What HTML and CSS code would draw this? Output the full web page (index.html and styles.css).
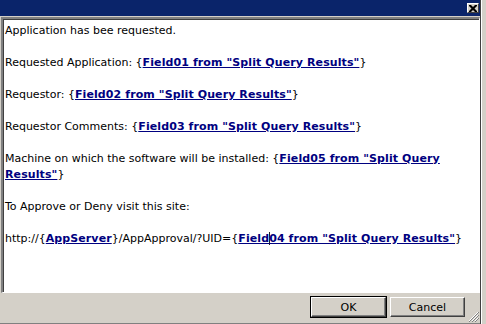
FILE: index.html
```html
<!DOCTYPE html>
<html>
<head>
<meta charset="utf-8">
<link rel="stylesheet" href="styles.css">
</head>
<body>
<div class="desk">
  <div class="dialog">
    <div class="titlebar">
      <span class="close">
        <svg width="8" height="7" viewBox="0 0 8 7"><path d="M0 0h2l2 2 2-2h2v1l-2.5 2.5L8 6v1H6L4 5 2 7H0V6l2.5-2.5L0 1z" fill="#000"/></svg>
      </span>
    </div>
    <div class="content">
      <p>Application has bee requested.</p>
      <p>Requested Application: {<a href="#">Field01 from "Split Query Results"</a>}</p>
      <p>Requestor: {<a href="#">Field02 from "Split Query Results"</a>}</p>
      <p>Requestor Comments: {<a href="#">Field03 from "Split Query Results"</a>}</p>
      <p>Machine on which the software will be installed: {<a href="#">Field05 from "Split Query Results"</a>}</p>
      <p>To Approve or Deny visit this site:</p>
      <p>http://{<a href="#">AppServer</a>}/AppApproval/?UID={<a href="#">Field<span class="caret"></span>04 from "Split Query Results"</a>}</p>
    </div>
    <div class="footer">
      <button class="btn default">OK</button>
      <button class="btn">Cancel</button>
      <span class="grip">
        <svg width="11" height="11" viewBox="0 0 11 11"><path d="M10 1L1 10M10 4L4 10M10 7L7 10" stroke="#fff" stroke-width="1"/><path d="M11 1L1 11M11 4L4 11M11 7L7 11" stroke="#808080" stroke-width="1"/></svg>
      </span>
    </div>
  </div>
  <div class="behind"></div>
</div>
</body>
</html>
```
FILE: styles.css
```css
html, body {
  margin: 0;
  padding: 0;
}
body {
  background: #d4d0c8;
  font-family: "DejaVu Sans", Tahoma, sans-serif;
  font-size: 11px;
}
.desk {
  display: flex;
  width: 486px;
  height: 324px;
}
.dialog {
  width: 481px;
  height: 324px;
  display: flex;
  flex-direction: column;
  background: #d4d0c8;
  border-right: 1px solid #404040;
  box-sizing: border-box;
}
.titlebar {
  height: 16px;
  background: #0a246a;
  display: flex;
  justify-content: flex-end;
  align-items: flex-start;
  padding: 3px 1px 0 0;
  box-sizing: border-box;
  flex: none;
}
.close {
  width: 12px;
  height: 10px;
  background: #d4d0c8;
  border-top: 1px solid #fff;
  border-left: 1px solid #fff;
  border-right: 1px solid #404040;
  border-bottom: 1px solid #404040;
  box-sizing: border-box;
  display: flex;
  align-items: center;
  justify-content: center;
}
.close svg { display: block; }
.content {
  flex: 1;
  margin: 1px 0 0 1px;
  background: #fff;
  border-top: 2px solid #808080;
  border-left: 2px solid #808080;
  border-right: 1px solid #fff;
  border-bottom: 1px solid #fff;
  box-shadow: inset 1px 1px 0 #404040;
  padding: 4px 6px 0 2px;
  color: #000;
  line-height: 16px;
  overflow: hidden;
}
.content p {
  margin: 0 0 16px 0;
}
.content a {
  color: #000080;
  font-weight: bold;
  text-decoration: underline;
  letter-spacing: 0.1px;
}
.caret {
  display: inline-block;
  width: 1px;
  height: 13px;
  background: #222;
  vertical-align: -3px;
  margin-right: -1px;
}
.footer {
  height: 31px;
  flex: none;
  display: flex;
  justify-content: flex-end;
  align-items: flex-start;
  padding: 4px 0 0 0;
  box-sizing: border-box;
  border-bottom: 1px solid #808080;
  position: relative;
}
.btn {
  width: 75px;
  height: 20px;
  margin: 0 4px 0 0;
  font-family: "DejaVu Sans", Tahoma, sans-serif;
  font-size: 11px;
  background: #d4d0c8;
  color: #000;
  border-top: 1px solid #fff;
  border-left: 1px solid #fff;
  border-right: 1px solid #404040;
  border-bottom: 1px solid #404040;
  box-shadow: inset -1px -1px 0 #808080;
  padding: 0;
}
.btn.default {
  outline: 1px solid #000;
}
.footer .btn:last-of-type {
  margin-right: 15px;
}
.grip {
  position: absolute;
  right: 1px;
  bottom: 1px;
  width: 11px;
  height: 11px;
}
.grip svg { display: block; }
.behind {
  flex: 1;
  background: #d4d0c8;
  border-left: 1px solid #fff;
}
```
